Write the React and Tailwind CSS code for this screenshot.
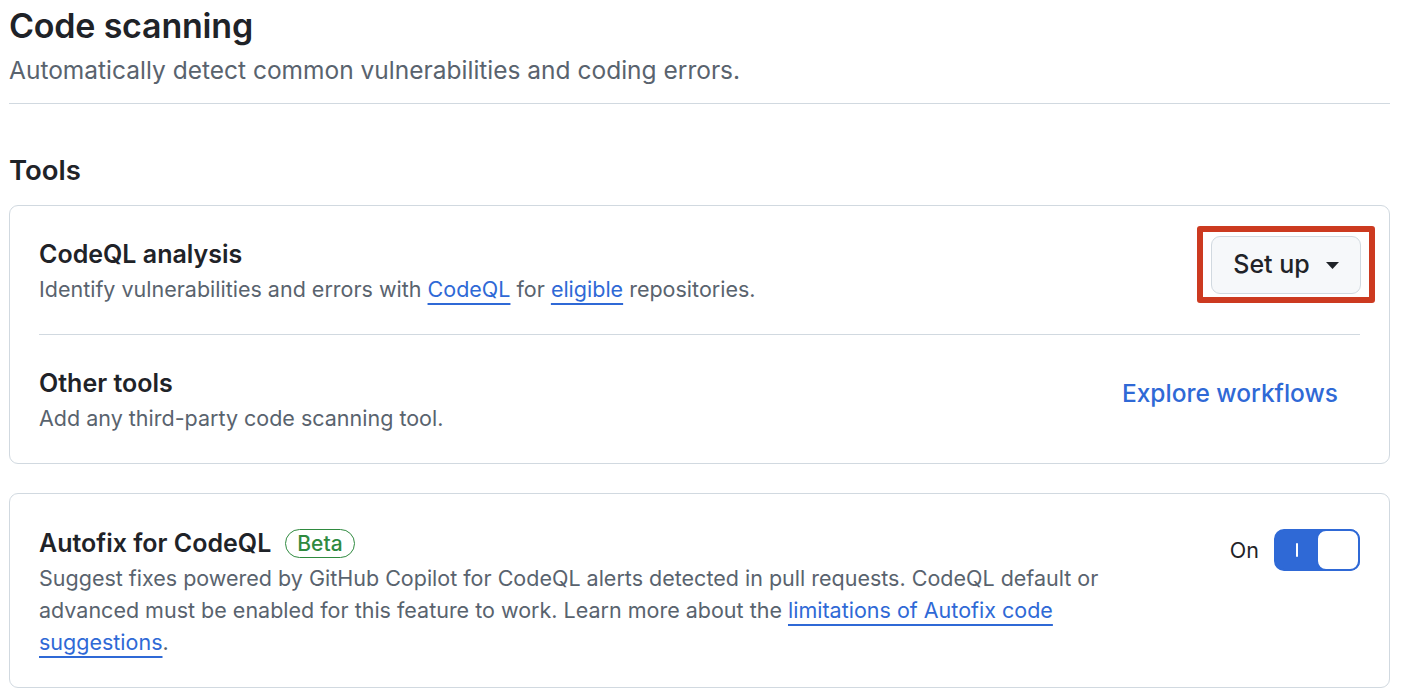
import React from "react";

function Toggle() {
  return (
    <button className="relative flex h-[42px] w-[86px] items-center rounded-[10px] border-2 border-[#2f69d6] bg-[#2f69d6]">
      <span className="flex w-[42px] justify-center">
        <span className="block h-[14px] w-[2px] rounded bg-white" />
      </span>
      <span className="absolute right-[-2px] top-[-2px] h-[42px] w-[44px] rounded-[10px] border-2 border-[#2f69d6] bg-white" />
    </button>
  );
}

export default function App() {
  return (
    <div
      className="min-h-screen bg-white pl-[9px] pr-[12px] pt-[3px] text-[#1f2328]"
      style={{ fontFamily: "Inter, 'Noto Sans', sans-serif" }}
    >
      {/* page header */}
      <header className="border-b border-[#d1d9e0] pb-[16px]">
        <h1 className="text-[34px] font-semibold leading-[46px] tracking-[-0.2px]">
          Code scanning
        </h1>
        <p className="mt-[4px] text-[24.5px] leading-[34px] text-[#59636e]">
          Automatically detect common vulnerabilities and coding errors.
        </p>
      </header>

      <h2 className="mt-[47px] text-[27.5px] font-semibold leading-[38px]">Tools</h2>

      {/* tools card */}
      <section className="mt-[16px] rounded-[9px] border border-[#d1d9e0] px-[29px]">
        <div className="flex items-start justify-between border-b border-[#d1d9e0] pb-[29px] pt-[30px]">
          <div>
            <h3 className="text-[25px] font-semibold leading-[36px]">CodeQL analysis</h3>
            <p className="mt-[1px] text-[21.5px] leading-[32px] text-[#59636e]">
              Identify vulnerabilities and errors with{" "}
              <a className="text-[#2f69d6] underline decoration-[1.5px] underline-offset-[6px]">CodeQL</a>{" "}
              for{" "}
              <a className="text-[#2f69d6] underline decoration-[1.5px] underline-offset-[6px]">eligible</a>{" "}
              repositories.
            </p>
          </div>
          <div className="mr-[-15px] mt-[-10px] rounded-[3px] border-[6px] border-[#cc3a20] px-[8px] pb-[3px] pt-[4px]">
            <button className="flex h-[58px] w-[150px] items-center justify-center gap-[16px] rounded-[9px] border border-[#d1d9e0] bg-[#f6f8fa] text-[25px] font-medium">
              Set up
              <svg width="13" height="7" viewBox="0 0 13 7">
                <path d="M0 0h13L6.5 7z" fill="#1f2328" />
              </svg>
            </button>
          </div>
        </div>
        <div className="flex items-start justify-between pb-[29px] pt-[30px]">
          <div>
            <h3 className="text-[25px] font-semibold leading-[36px]">Other tools</h3>
            <p className="mt-[1px] text-[21.5px] leading-[32px] text-[#59636e]">
              Add any third-party code scanning tool.
            </p>
          </div>
          <a className="mr-[22px] mt-[10px] text-[24.5px] font-medium leading-[36px] text-[#2f69d6]">
            Explore workflows
          </a>
        </div>
      </section>

      {/* autofix card */}
      <section className="mt-[29px] flex items-start justify-between rounded-[9px] border border-[#d1d9e0] px-[29px] pb-[29px] pt-[31px]">
        <div className="max-w-[1075px]">
          <div className="flex items-center gap-[14px]">
            <h3 className="text-[25px] font-semibold leading-[36px]">Autofix for CodeQL</h3>
            <span className="rounded-full border-[1.5px] border-[#2f8a3f] px-[11px] text-[21px] font-medium leading-[27px] text-[#2f8a3f]">
              Beta
            </span>
          </div>
          <p className="mt-[1px] text-[21.5px] leading-[32px] text-[#59636e]">
            Suggest fixes powered by GitHub Copilot for CodeQL alerts detected in pull requests. CodeQL default or
            advanced must be enabled for this feature to work. Learn more about the{" "}
            <a className="text-[#2f69d6] underline decoration-[1.5px] underline-offset-[6px]">
              limitations of Autofix code suggestions
            </a>
            .
          </p>
        </div>
        <div className="mt-[4px] flex items-center gap-[15px]">
          <span className="text-[21.5px] text-[#1f2328]">On</span>
          <Toggle />
        </div>
      </section>
    </div>
  );
}
